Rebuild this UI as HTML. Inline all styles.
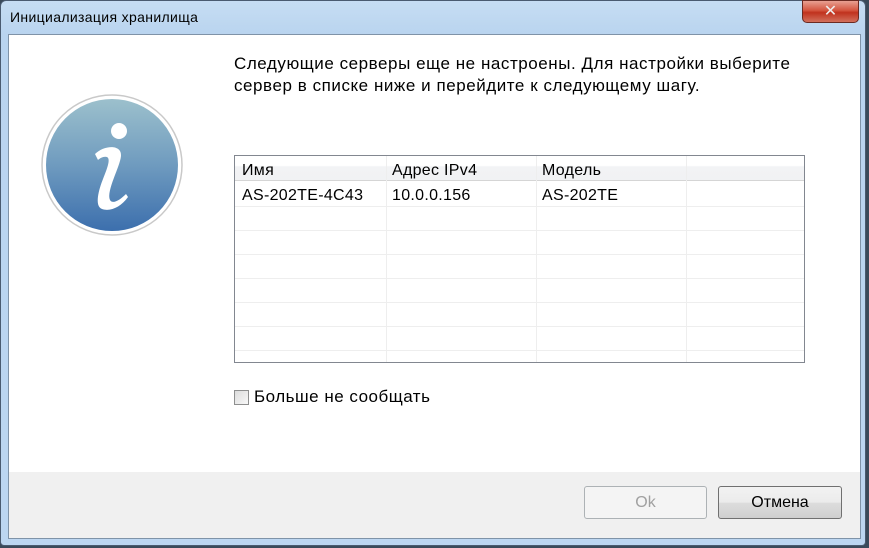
<!DOCTYPE html>
<html><head><meta charset="utf-8"><style>
*{margin:0;padding:0;box-sizing:border-box}
body{width:869px;height:548px;overflow:hidden;background:#3a4a5a;font-family:"Liberation Sans","DejaVu Sans",sans-serif;position:relative}
.win{position:absolute;left:0;top:0;width:866px;height:546px;border-radius:6px 6px 4px 4px;background:linear-gradient(180deg,#c6ddf3 0,#b9d4ef 34px,#bcd6f1 100%);border:1px solid #4a5b70}
.title{position:absolute;left:9px;top:8px;font-size:14px;letter-spacing:0.35px;color:#000}
.close{position:absolute;left:801px;top:-1px;width:57px;height:23px;border-radius:0 0 5px 5px;background:linear-gradient(180deg,#e8a092 0,#d4553f 45%,#c0321e 55%,#d2705c 100%);border:1px solid #6b2a22;color:#eee;text-align:center;font-size:16px;font-weight:bold;line-height:21px}
.client{position:absolute;left:8px;top:34px;width:853px;height:505px;background:#fff;border:1px solid #7f93a8}
.footer{position:absolute;left:0;top:437px;width:851px;height:66px;background:#f0f0f0}
.msg{position:absolute;left:225px;top:18px;font-size:17px;letter-spacing:0.55px;line-height:22px;color:#000;white-space:nowrap}
.icon{position:absolute;left:31px;top:58px}
.tbl{position:absolute;left:225px;top:120px;width:571px;height:208px;border:1px solid #828790;background:#fff;overflow:hidden}
.hdr{position:absolute;left:0;top:0;width:100%;height:25px;background:linear-gradient(180deg,#fff 0,#fff 40%,#f2f3f5 45%,#f1f2f4 100%);border-bottom:1px solid #d5d5d5}
.c{position:absolute;font-size:16px;letter-spacing:0.3px;color:#000;white-space:nowrap}
.vl{position:absolute;top:0;width:1px;height:100%;background:#eee}
.hl{position:absolute;left:0;width:100%;height:1px;background:#eee}
.cb{position:absolute;left:234px;top:390px;width:15px;height:15px;border:1px solid #8e8f8f;background:linear-gradient(135deg,#dcdcdc,#f8f8f8)}
.cbl{position:absolute;left:254px;top:387px;font-size:17px;letter-spacing:0.5px;white-space:nowrap}
.btn{position:absolute;height:33px;border-radius:3px;font-size:16px;text-align:center;line-height:31px}
</style></head><body>
<div class="win">
<div class="title">Инициализация хранилища</div>
<div class="close">✕</div>
</div>
<div class="client">
<div class="msg">Следующие серверы еще не настроены. Для настройки выберите<br>сервер в списке ниже и перейдите к следующему шагу.</div>
<svg class="icon" width="144" height="144" viewBox="0 0 144 144">
<defs><linearGradient id="g" x1="0" y1="0" x2="0" y2="1"><stop offset="0" stop-color="#9cc0cc"/><stop offset="0.5" stop-color="#6f9bbf"/><stop offset="1" stop-color="#3c6fad"/></linearGradient></defs>
<circle cx="72" cy="72" r="70" fill="#fff" stroke="#c9c9c9" stroke-width="1.5"/>
<circle cx="72" cy="72" r="66" fill="url(#g)"/>
<circle cx="79" cy="38" r="8" fill="#fff"/>
<path d="M55 61 C64 52 82 51 81 63 C80 74 66 98 70 107 C73 112 81 106 86 101 L88 104 C81 114 70 119 62 116 C54 113 59 96 63 86 C67 76 71 66 67 64 C64 63 60 65 58 67 Z" fill="#fff"/>
</svg>
<div class="tbl">
<div class="hdr"></div>
<div class="vl" style="left:151px"></div><div class="vl" style="left:301px"></div><div class="vl" style="left:451px"></div>
<div class="hl" style="top:50px"></div><div class="hl" style="top:74px"></div><div class="hl" style="top:98px"></div><div class="hl" style="top:122px"></div><div class="hl" style="top:146px"></div><div class="hl" style="top:170px"></div><div class="hl" style="top:194px"></div>
<div class="c" style="left:7px;top:6px">Имя</div>
<div class="c" style="left:157px;top:6px">Адрес IPv4</div>
<div class="c" style="left:307px;top:6px">Модель</div>
<div class="c" style="left:7px;top:31px">AS-202TE-4C43</div>
<div class="c" style="left:157px;top:31px">10.0.0.156</div>
<div class="c" style="left:307px;top:31px">AS-202TE</div>
</div>
<div class="footer">
<div class="btn" style="left:575px;top:14px;width:123px;border:1px solid #adb2b5;background:#f4f4f4;color:#a0a0a0">Ok</div>
<div class="btn" style="left:709px;top:14px;width:124px;border:1px solid #707070;background:linear-gradient(180deg,#f2f2f2 0,#ebebeb 50%,#dddddd 51%,#cfcfcf 100%);color:#000">Отмена</div>
</div>
</div>
<div class="cb"></div>
<div class="cbl">Больше не сообщать</div>
</body></html>
